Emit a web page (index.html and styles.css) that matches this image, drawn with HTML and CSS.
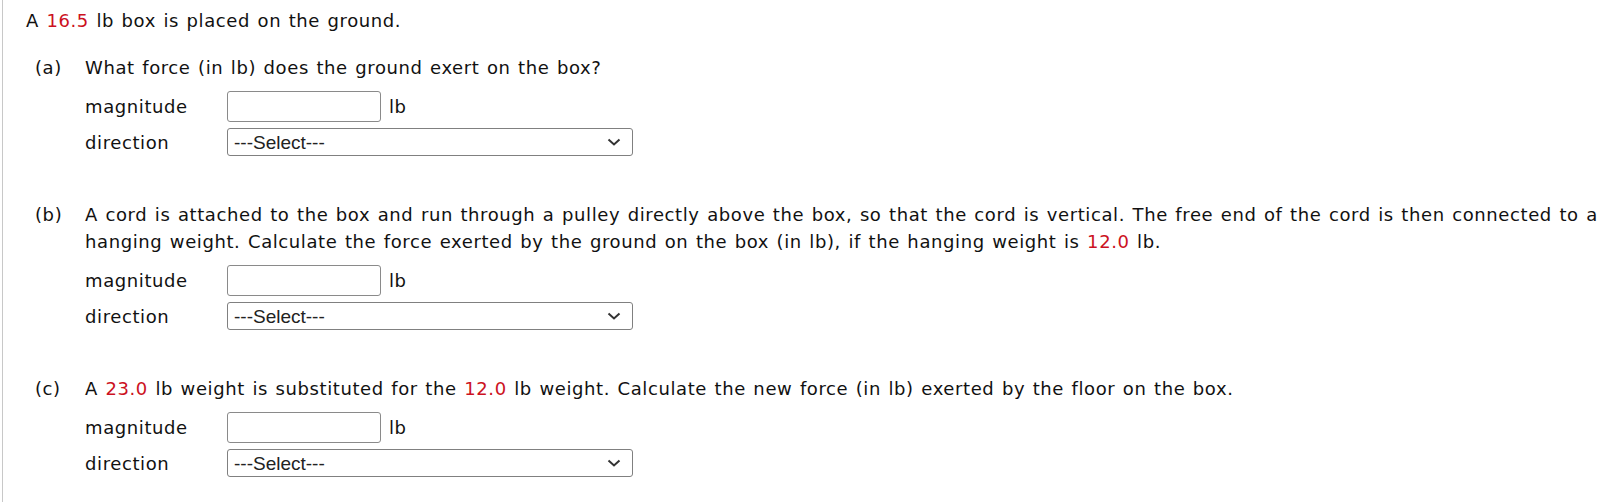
FILE: index.html
```html
<!DOCTYPE html>
<html>
<head>
<meta charset="utf-8">
<link rel="stylesheet" href="styles.css">
</head>
<body>
<div class="page">
  <p class="intro">A <span class="num">16.5</span> lb box is placed on the ground.</p>

  <div class="part">
    <div class="part-label">(a)</div>
    <div class="part-body">
      <div class="part-text">What force (in lb) does the ground exert on the box?</div>
      <div class="rows">
        <div class="row"><span class="label">magnitude</span><input class="field" type="text"><span class="unit">lb</span></div>
        <div class="row"><span class="label">direction</span><span class="select-wrap"><select class="dir"><option>---Select---</option></select><svg class="chev" width="14" height="8" viewBox="0 0 14 8"><path d="M1.5 1.5 L7 6.5 L12.5 1.5" fill="none" stroke="#333" stroke-width="2"/></svg></span></div>
      </div>
    </div>
  </div>

  <div class="part">
    <div class="part-label">(b)</div>
    <div class="part-body">
      <div class="part-text">A cord is attached to the box and run through a pulley directly above the box, so that the cord is vertical. The free end of the cord is then connected to a hanging weight. Calculate the force exerted by the ground on the box (in lb), if the hanging weight is <span class="num">12.0</span> lb.</div>
      <div class="rows">
        <div class="row"><span class="label">magnitude</span><input class="field" type="text"><span class="unit">lb</span></div>
        <div class="row"><span class="label">direction</span><span class="select-wrap"><select class="dir"><option>---Select---</option></select><svg class="chev" width="14" height="8" viewBox="0 0 14 8"><path d="M1.5 1.5 L7 6.5 L12.5 1.5" fill="none" stroke="#333" stroke-width="2"/></svg></span></div>
      </div>
    </div>
  </div>

  <div class="part">
    <div class="part-label">(c)</div>
    <div class="part-body">
      <div class="part-text">A <span class="num">23.0</span> lb weight is substituted for the <span class="num">12.0</span> lb weight. Calculate the new force (in lb) exerted by the floor on the box.</div>
      <div class="rows">
        <div class="row"><span class="label">magnitude</span><input class="field" type="text"><span class="unit">lb</span></div>
        <div class="row"><span class="label">direction</span><span class="select-wrap"><select class="dir"><option>---Select---</option></select><svg class="chev" width="14" height="8" viewBox="0 0 14 8"><path d="M1.5 1.5 L7 6.5 L12.5 1.5" fill="none" stroke="#333" stroke-width="2"/></svg></span></div>
      </div>
    </div>
  </div>
</div>
</body>
</html>
```

FILE: styles.css
```css
html, body {
  margin: 0;
  padding: 0;
  background: #fff;
}
body {
  font-family: "DejaVu Sans", Verdana, sans-serif;
  font-size: 18px;
  line-height: 27px;
  letter-spacing: 0.6px;
  word-spacing: 1.2px;
  color: #111;
}
.page {
  margin-left: 2px;
  border-left: 1px solid #c8c8c8;
  min-height: 502px;
  box-sizing: border-box;
  padding: 7px 0 0 23px;
}
.intro {
  margin: 0;
}
.num {
  color: #cc1122;
}
.part {
  display: flex;
  margin-left: 9px;
  margin-top: 45px;
}
.part:first-of-type {
  margin-top: 20px;
}
.part-label {
  width: 50px;
  flex: none;
}
.part-body {
  flex: 1;
}
.rows {
  margin-top: 10px;
  display: flex;
  flex-direction: column;
  gap: 6px;
}
.row {
  display: flex;
  align-items: center;
}
.label {
  width: 142px;
  flex: none;
}
.field {
  box-sizing: border-box;
  width: 154px;
  height: 31px;
  border: 1px solid #8a8a8a;
  border-radius: 3px;
  margin: 0;
  padding: 0 4px;
  font: inherit;
}
.unit {
  margin-left: 8px;
}
.select-wrap {
  position: relative;
  display: inline-flex;
}
.dir {
  appearance: none;
  -webkit-appearance: none;
  box-sizing: border-box;
  width: 406px;
  height: 28px;
  margin: 0;
  border: 1px solid #808080;
  border-radius: 3px;
  background: #fff;
  padding: 0 0 0 6px;
  font-family: "Liberation Sans", Arial, sans-serif;
  font-size: 19px;
  letter-spacing: 0;
  word-spacing: 0;
  color: #222;
}
.chev {
  position: absolute;
  right: 12px;
  top: 10px;
  pointer-events: none;
}
```
